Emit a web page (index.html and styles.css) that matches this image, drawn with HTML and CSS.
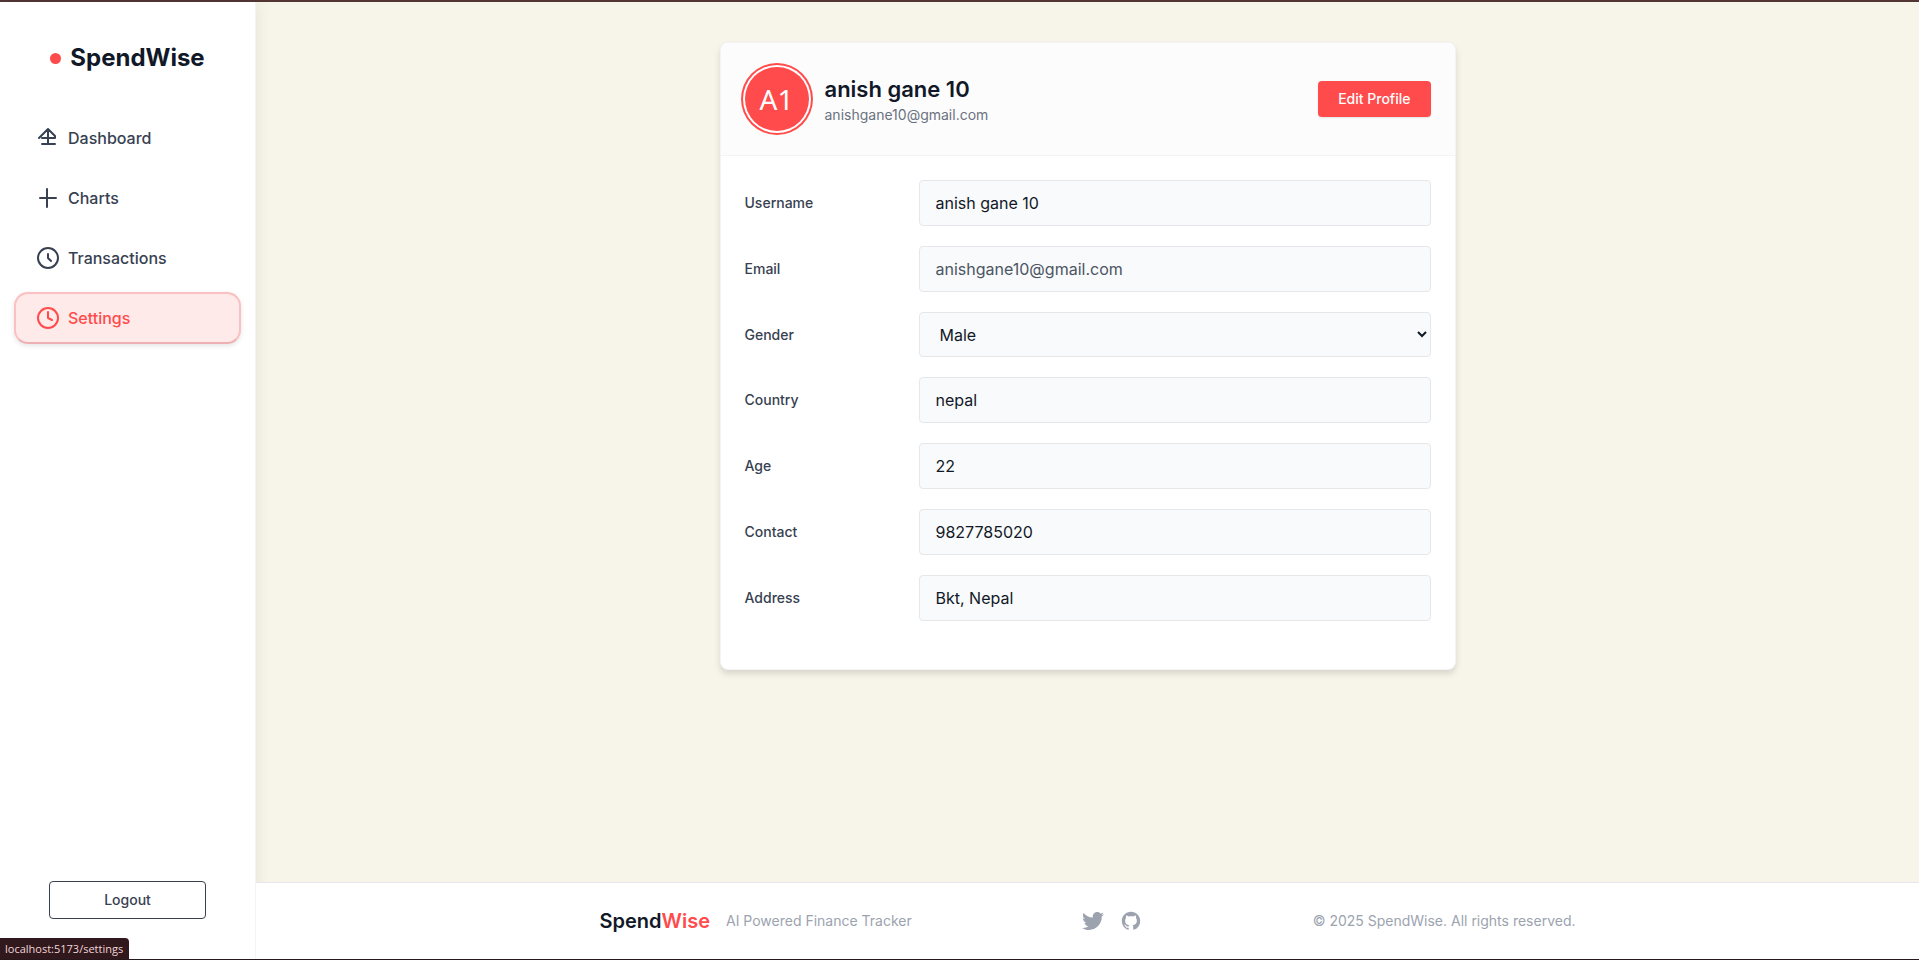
FILE: index.html
```html
<!DOCTYPE html>
<html lang="en">
<head>
<meta charset="utf-8">
<title>SpendWise – Settings</title>
<link rel="stylesheet" href="styles.css">
</head>
<body>
<div class="app">
  <aside class="sidebar">
    <div class="brand"><span class="brand-dot"></span><span>SpendWise</span></div>
    <nav class="nav">
      <a class="nav-item" href="#dashboard">
        <svg viewBox="0 0 24 24"><path d="M3 12l9-9 7 7v2H6M12 3v15M6 18h13"/></svg>
        <span>Dashboard</span>
      </a>
      <a class="nav-item" href="#charts">
        <svg viewBox="0 0 24 24"><path d="M11 3v18M4 12h16"/></svg>
        <span>Charts</span>
      </a>
      <a class="nav-item" href="#transactions">
        <svg viewBox="0 0 24 24"><circle cx="12" cy="12" r="10"/><path d="M12 8v4l3 3"/></svg>
        <span>Transactions</span>
      </a>
      <a class="nav-item active" href="#settings">
        <svg viewBox="0 0 24 24"><circle cx="12" cy="12" r="10"/><path d="M12 6v6l4 2"/></svg>
        <span>Settings</span>
      </a>
    </nav>
    <button class="logout" type="button">Logout</button>
  </aside>
  <div class="page">
    <main class="main">
      <section class="card">
        <header class="card-header">
          <div class="avatar">A1</div>
          <div class="identity">
            <h1 class="name">anish gane 10</h1>
            <p class="mail">anishgane10@gmail.com</p>
          </div>
          <button class="edit" type="button">Edit Profile</button>
        </header>
        <form class="form">
          <div class="row"><label for="username">Username</label><input class="field" id="username" type="text" value="anish gane 10"></div>
          <div class="row"><label for="email">Email</label><input class="field muted" id="email" type="email" value="anishgane10@gmail.com"></div>
          <div class="row"><label for="gender">Gender</label><select class="field" id="gender"><option>Male</option><option>Female</option></select></div>
          <div class="row"><label for="country">Country</label><input class="field" id="country" type="text" value="nepal"></div>
          <div class="row"><label for="age">Age</label><input class="field" id="age" type="text" value="22"></div>
          <div class="row"><label for="contact">Contact</label><input class="field" id="contact" type="text" value="9827785020"></div>
          <div class="row"><label for="address">Address</label><input class="field" id="address" type="text" value="Bkt, Nepal"></div>
        </form>
      </section>
    </main>
    <footer class="footer">
      <div class="footer-inner">
        <div class="footer-brand">
          <span class="footer-logo">Spend<span class="accent">Wise</span></span>
          <span>AI Powered Finance Tracker</span>
        </div>
        <div class="social">
          <a href="#twitter" aria-label="Twitter"><svg viewBox="0 0 24 24"><path d="M24 4.557c-.883.392-1.832.656-2.828.775 1.017-.609 1.798-1.574 2.165-2.724-.951.564-2.005.974-3.127 1.195-.897-.957-2.178-1.555-3.594-1.555-3.179 0-5.515 2.966-4.797 6.045-4.091-.205-7.719-2.165-10.148-5.144-1.290 2.213-.669 5.108 1.523 6.574-.806-.026-1.566-.247-2.229-.616-.054 2.281 1.581 4.415 3.949 4.890-.693.188-1.452.232-2.224.084.626 1.956 2.444 3.379 4.600 3.419-2.070 1.623-4.678 2.348-7.290 2.040 2.179 1.397 4.768 2.212 7.548 2.212 9.142 0 14.307-7.721 13.995-14.646.962-.695 1.797-1.562 2.457-2.549z"/></svg></a>
          <a href="#github" aria-label="GitHub"><svg viewBox="0 0 24 24"><path d="M12 2C6.477 2 2 6.484 2 12.017c0 4.425 2.865 8.180 6.839 9.504.5.092.682-.217.682-.483 0-.237-.008-.868-.013-1.703-2.782.605-3.369-1.343-3.369-1.343-.454-1.158-1.110-1.466-1.110-1.466-.908-.620.069-.608.069-.608 1.003.070 1.531 1.032 1.531 1.032.892 1.530 2.341 1.088 2.910.832.092-.647.350-1.088.636-1.338-2.220-.253-4.555-1.113-4.555-4.951 0-1.093.390-1.988 1.029-2.688-.103-.253-.446-1.272.098-2.650 0 0 .840-.270 2.750 1.026A9.564 9.564 0 0112 6.844c.850.004 1.705.115 2.504.337 1.909-1.296 2.747-1.027 2.747-1.027.546 1.379.202 2.398.100 2.651.640.700 1.028 1.595 1.028 2.688 0 3.848-2.339 4.695-4.566 4.943.359.309.678.920.678 1.855 0 1.338-.012 2.419-.012 2.747 0 .268.180.580.688.482A10.019 10.019 0 0022 12.017C22 6.484 17.522 2 12 2z"/></svg></a>
        </div>
        <span>© 2025 SpendWise. All rights reserved.</span>
      </div>
    </footer>
  </div>
</div>
<div class="status">localhost:5173/settings</div>
</body>
</html>
```

FILE: styles.css
```css
* { box-sizing: border-box; }
body {
  margin: 0;
  font-family: Inter, "Liberation Sans", sans-serif;
  font-size: 16px;
  line-height: 24px;
  color: #111827;
  background: #f7f4e9;
}
button, input, select { font: inherit; }
a { color: inherit; text-decoration: none; }
.app {
  display: flex;
  min-height: 100vh;
  border-top: 2px solid #533536;
  border-bottom: 1px solid #28191f;
}
.sidebar {
  flex: none;
  width: 256px;
  display: flex;
  flex-direction: column;
  padding: 40px 14px;
  background: #fff;
  border-right: 1px solid #f3f4f6;
  box-shadow: 4px 0 12px rgba(0, 0, 0, .05);
  z-index: 1;
}
.brand {
  display: flex;
  align-items: center;
  justify-content: center;
  gap: 9px;
  height: 32px;
  margin-bottom: 38px;
  font-size: 24px;
  line-height: 32px;
  font-weight: 700;
}
.brand-dot { width: 11px; height: 11px; border-radius: 50%; background: #ff4b4b; }
.nav { display: flex; flex-direction: column; gap: 8px; }
.nav-item {
  display: flex;
  align-items: center;
  gap: 8px;
  height: 52px;
  padding: 0 20px;
  border: 2px solid transparent;
  border-radius: 14px;
  color: #374151;
  font-weight: 500;
}
.nav-item svg { width: 24px; height: 24px; fill: none; stroke: currentColor; stroke-width: 2; stroke-linecap: round; stroke-linejoin: round; }
.nav-item.active {
  color: #ff4b4b;
  background: #ffeaea;
  border-color: #fbc0c2;
  border-bottom-color: #efb0b3;
  box-shadow: 0 2px 5px rgba(0, 0, 0, .1);
}
.logout {
  width: 157px;
  height: 38px;
  margin: auto auto 0;
  padding: 0;
  border: 1px solid #374151;
  border-radius: 4px;
  background: #fff;
  color: #374151;
  font-size: 14px;
  font-weight: 500;
}
.page { flex: 1; display: flex; flex-direction: column; min-width: 0; }
.main { flex: 1; padding: 40px 24px; }
.card {
  max-width: 736px;
  margin: 0 auto;
  overflow: hidden;
  background: #fff;
  border: 1px solid #f3f4f6;
  border-radius: 8px;
  box-shadow: 0 4px 6px rgba(0, 0, 0, .12);
}
.card-header {
  display: flex;
  align-items: center;
  gap: 16px;
  padding: 24px;
  background: #fcfcfc;
  border-bottom: 1px solid #f3f4f6;
}
.avatar {
  display: grid;
  place-items: center;
  width: 64px;
  height: 64px;
  border-radius: 50%;
  background: #ff4b4b;
  color: #fff;
  font-family: "Noto Sans", sans-serif;
  font-size: 28px;
  box-shadow: 0 0 0 2px #fff, 0 0 0 4px #ff4b4b;
}
.identity { flex: 1; }
.name { margin: 0; font-size: 22px; line-height: 32px; font-weight: 600; }
.mail { margin: 0; font-size: 14px; line-height: 20px; color: #6b7280; }
.edit {
  height: 36px;
  padding: 0 20px;
  border: 0;
  border-radius: 4px;
  background: #ff4b4b;
  color: #fff;
  font-size: 14px;
  font-weight: 500;
  box-shadow: 0 1px 2px rgba(0, 0, 0, .1);
}
.form { display: flex; flex-direction: column; gap: 20px; padding: 24px 24px 48px; }
.row { display: flex; align-items: center; gap: 16px; }
.row label { flex: none; width: 158px; font-size: 14px; font-weight: 500; color: #374151; }
.field {
  flex: 1;
  min-width: 0;
  height: 46px;
  padding: 0 16px;
  border: 1px solid #e5e7eb;
  border-radius: 4px;
  background: #f9fafb;
  color: #111827;
}
select.field { height: 45px; padding-right: 0; }
.field.muted { color: #4b5563; }
.footer {
  position: relative;
  z-index: 2;
  background: #fff;
  border-top: 1px solid #e5e7eb;
  color: #9ca3af;
  font-size: 14px;
}
.footer-inner {
  display: flex;
  align-items: center;
  justify-content: space-between;
  max-width: 1024px;
  height: 76px;
  margin: 0 auto;
  padding: 0 24px;
}
.footer-brand { display: flex; align-items: center; gap: 16px; }
.footer-logo { font-size: 20px; font-weight: 600; color: #111827; }
.accent { color: #ff4b4b; }
.social { display: flex; gap: 16px; }
.social a { display: flex; }
.social svg { width: 22px; height: 22px; fill: currentColor; }
.status {
  position: fixed;
  left: 0;
  bottom: 1px;
  z-index: 3;
  padding: 0 6px 0 5px;
  border-radius: 0 4px 0 0;
  background: #31181c;
  color: #f0d6d8;
  font-family: "Open Sans", "Noto Sans", sans-serif;
  font-size: 11px;
  line-height: 21px;
}
```
